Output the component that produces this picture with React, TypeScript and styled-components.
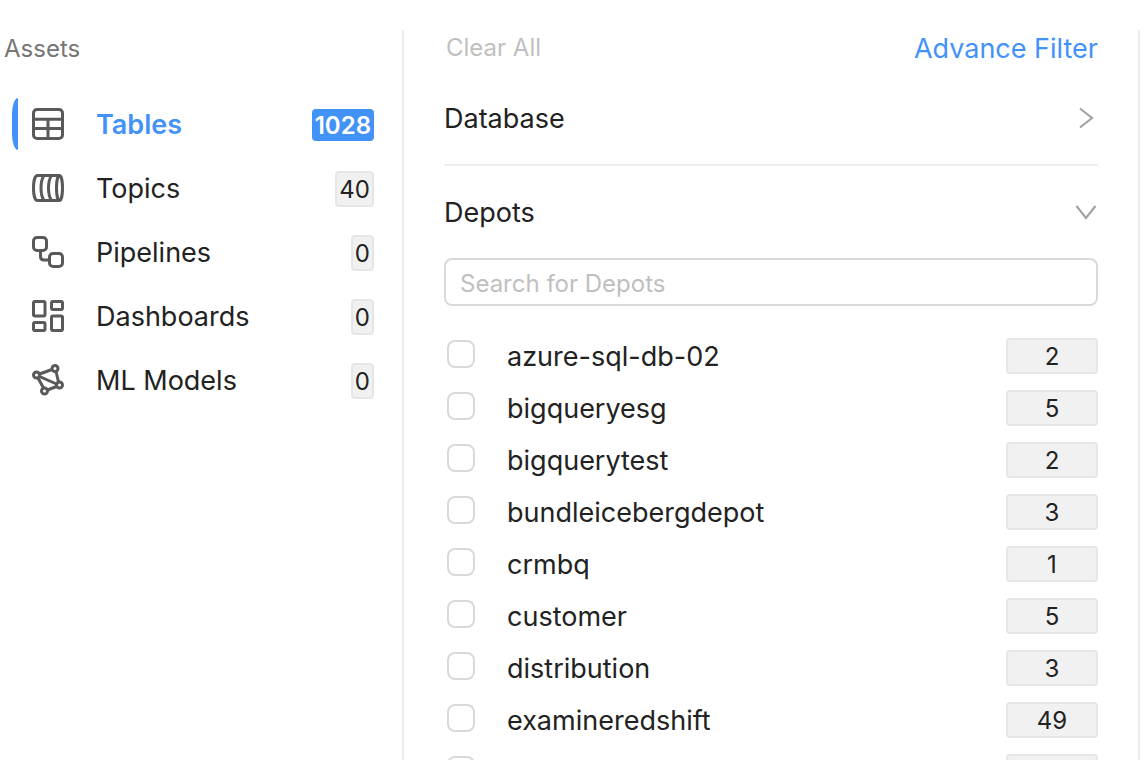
import React from "react";
import styled, { createGlobalStyle } from "styled-components";

const GlobalStyle = createGlobalStyle`
  *, *::before, *::after { box-sizing: border-box; }
  body {
    margin: 0;
    background: #fff;
    color: #222;
    font-family: Inter, "Liberation Sans", sans-serif;
    font-size: 27px;
    line-height: 36px;
  }
  button, input { font: inherit; color: inherit; }
`;

const Page = styled.div`
  display: flex;
  height: 100vh;
  padding: 30px 4px 0 0;
  overflow: hidden;
`;

const Sidebar = styled.aside`
  flex: 0 0 404px;
  border-right: 2px solid #ededed;
`;

const SidebarTitle = styled.h2`
  margin: 0;
  padding-left: 4px;
  color: #767676;
  font-size: 24px;
  font-weight: 400;
  line-height: 38px;
`;

const AssetList = styled.nav`
  display: flex;
  flex-direction: column;
  gap: 12px;
  padding: 30px 28px 0 12px;
`;

const AssetItem = styled.button<{ $active?: boolean }>`
  display: flex;
  align-items: center;
  height: 52px;
  padding: 0;
  border: 0;
  background: none;
  text-align: left;
  cursor: pointer;
  color: ${(p) => (p.$active ? "#4392f7" : "inherit")};
  font-weight: ${(p) => (p.$active ? 600 : 400)};
`;

const ActiveMark = styled.span<{ $active?: boolean }>`
  width: 6px;
  height: 52px;
  margin-right: 14px;
  border-radius: 6px 0 0 6px / 16px 0 0 16px;
  background: ${(p) => (p.$active ? "#4392f7" : "transparent")};
`;

const AssetIcon = styled.svg`
  flex: none;
  width: 32px;
  height: 32px;
  margin-right: 32px;
  fill: none;
  stroke: #595959;
  stroke-width: 3;
  stroke-linejoin: round;
`;

const Name = styled.span`
  display: block;
  padding-top: 2px;
  line-height: 34px;
`;

const AssetCount = styled.span<{ $active?: boolean }>`
  margin: 2px 0 0 auto;
  padding: ${(p) => (p.$active ? "2px 3px 0" : "2px 2px 0")};
  border: ${(p) => (p.$active ? "0" : "2px solid #e5e5ea")};
  border-radius: 4px;
  background: ${(p) => (p.$active ? "#4392f7" : "#f1f1f1")};
  color: ${(p) => (p.$active ? "#fff" : "inherit")};
  font-size: 24px;
  line-height: 30px;
`;

const Filters = styled.main`
  flex: 1;
  min-width: 0;
  padding: 0 40px;
  border-right: 2px solid #ededed;
  overflow: hidden;
`;

const FilterBar = styled.div`
  display: flex;
  justify-content: space-between;
  align-items: center;
  margin-bottom: 6px;
`;

const ClearButton = styled.button`
  padding: 0 2px;
  border: 0;
  background: none;
  font-size: 24px;

  &:disabled { color: #bfbfbf; }
`;

const AdvanceLink = styled.a`
  color: #4392f7;
  text-decoration: none;
`;

const SectionHeader = styled.button`
  display: flex;
  justify-content: space-between;
  align-items: center;
  width: 100%;
  padding: 0;
  border: 0;
  background: none;
  text-align: left;
  cursor: pointer;
`;

const Section = styled.section`
  padding: 28px 0;

  & + & { border-top: 2px solid #ededed; }
`;

const Chevron = styled.svg`
  width: 24px;
  height: 24px;
  fill: none;
  stroke: #a3a3a3;
  stroke-width: 2.2;
`;

const SearchInput = styled.input`
  display: block;
  width: 100%;
  height: 48px;
  margin: 28px 0 32px;
  padding: 2px 14px 0;
  border: 2px solid #d9d9d9;
  border-radius: 8px;
  background: #fff;
  font-size: 24px;

  &::placeholder { color: #bfbfbf; opacity: 1; }
`;

const DepotList = styled.ul`
  display: flex;
  flex-direction: column;
  gap: 16px;
  margin: 0;
  padding: 0;
  list-style: none;
`;

const DepotRow = styled.li`
  display: flex;
  justify-content: space-between;
  align-items: center;
  height: 36px;
`;

const DepotLabel = styled.label`
  display: flex;
  gap: 32px;
  align-items: center;
  padding-left: 3px;
`;

const Checkbox = styled.input`
  appearance: none;
  width: 28px;
  height: 28px;
  margin: 0 0 4px;
  border: 2px solid #d9d9d9;
  border-radius: 8px;
  background: #fff;

  &:checked { background: #4392f7; border-color: #4392f7; }
`;

const DepotCount = styled.span`
  width: 92px;
  height: 36px;
  border: 2px solid #e5e5ea;
  border-radius: 4px;
  background: #f1f1f1;
  font-size: 24px;
  line-height: 34px;
  text-align: center;
`;

const assets = [
  {
    name: "Tables",
    count: 1028,
    icon: (
      <>
        <rect x="1.5" y="1.5" width="29" height="29" rx="3.5" />
        <path d="M1.5 11.2h29M1.5 20.6h29M16 11.2v19.3" />
      </>
    ),
  },
  {
    name: "Topics",
    count: 40,
    icon: (
      <>
        <path d="M27.5 3.5H5.5C3 3.5 1.5 9 1.5 16s1.5 12.5 4 12.5h22" />
        <ellipse cx="27.5" cy="16" rx="3" ry="12.5" />
        <path d="M12 3.5c-4 6-4 19 0 25M19.5 3.5c-4 6-4 19 0 25" />
      </>
    ),
  },
  {
    name: "Pipelines",
    count: 0,
    icon: (
      <>
        <rect x="1.5" y="1.5" width="13" height="13" rx="3.5" />
        <rect x="17.5" y="17.5" width="13" height="13" rx="3.5" />
        <path d="M8.5 14.5v6c0 2.5 1.5 3.5 3.5 3.5h5.5" />
      </>
    ),
  },
  {
    name: "Dashboards",
    count: 0,
    icon: (
      <>
        <rect x="1.5" y="1.5" width="11.5" height="14.5" rx="1.5" />
        <rect x="19.5" y="1.5" width="11" height="8" rx="1.5" />
        <rect x="1.5" y="22.5" width="11.5" height="8" rx="1.5" />
        <rect x="19.5" y="16" width="11" height="14.5" rx="1.5" />
      </>
    ),
  },
  {
    name: "ML Models",
    count: 0,
    icon: (
      <>
        <circle cx="4.5" cy="11" r="3" />
        <circle cx="23" cy="4.5" r="3" />
        <circle cx="27.5" cy="21" r="3" />
        <circle cx="12.5" cy="27" r="3" />
        <path d="M7.5 10L20 5.5M24 7.5L26.5 18M24.5 22.5l-9 3.5M6 14l5.500 10M7.500 12.500l17 7.500" />
      </>
    ),
  },
];

const depots = [
  { name: "azure-sql-db-02", count: "2" },
  { name: "bigqueryesg", count: "5" },
  { name: "bigquerytest", count: "2" },
  { name: "bundleicebergdepot", count: "3" },
  { name: "crmbq", count: "1" },
  { name: "customer", count: "5" },
  { name: "distribution", count: "3" },
  { name: "examineredshift", count: "49" },
  { name: "", count: "" },
];

export default function App() {
  return (
    <>
      <GlobalStyle />
      <Page>
        <Sidebar>
          <SidebarTitle>Assets</SidebarTitle>
          <AssetList>
            {assets.map((asset, index) => (
              <AssetItem key={asset.name} type="button" $active={index === 0}>
                <ActiveMark $active={index === 0} />
                <AssetIcon viewBox="0 0 32 32" aria-hidden="true">
                  {asset.icon}
                </AssetIcon>
                <Name>{asset.name}</Name>
                <AssetCount $active={index === 0}>{asset.count}</AssetCount>
              </AssetItem>
            ))}
          </AssetList>
        </Sidebar>
        <Filters>
          <FilterBar>
            <ClearButton type="button" disabled>
              Clear All
            </ClearButton>
            <AdvanceLink href="#advance-filter">
              <Name>Advance Filter</Name>
            </AdvanceLink>
          </FilterBar>
          <Section>
            <SectionHeader type="button" aria-expanded={false}>
              <Name>Database</Name>
              <Chevron viewBox="0 0 24 24" aria-hidden="true">
                <path d="M6 2.5l12 9.5L6 21.5" />
              </Chevron>
            </SectionHeader>
          </Section>
          <Section>
            <SectionHeader type="button" aria-expanded={true}>
              <Name>Depots</Name>
              <Chevron viewBox="0 0 24 24" aria-hidden="true">
                <path d="M2.5 6l9.5 12L21.5 6" />
              </Chevron>
            </SectionHeader>
            <SearchInput
              type="text"
              placeholder="Search for Depots"
              aria-label="Search for Depots"
            />
            <DepotList>
              {depots.map((depot) => (
                <DepotRow key={depot.name}>
                  <DepotLabel>
                    <Checkbox
                      type="checkbox"
                      aria-label={depot.name || "Other depot"}
                    />
                    <Name>{depot.name}</Name>
                  </DepotLabel>
                  <DepotCount>{depot.count}</DepotCount>
                </DepotRow>
              ))}
            </DepotList>
          </Section>
        </Filters>
      </Page>
    </>
  );
}
